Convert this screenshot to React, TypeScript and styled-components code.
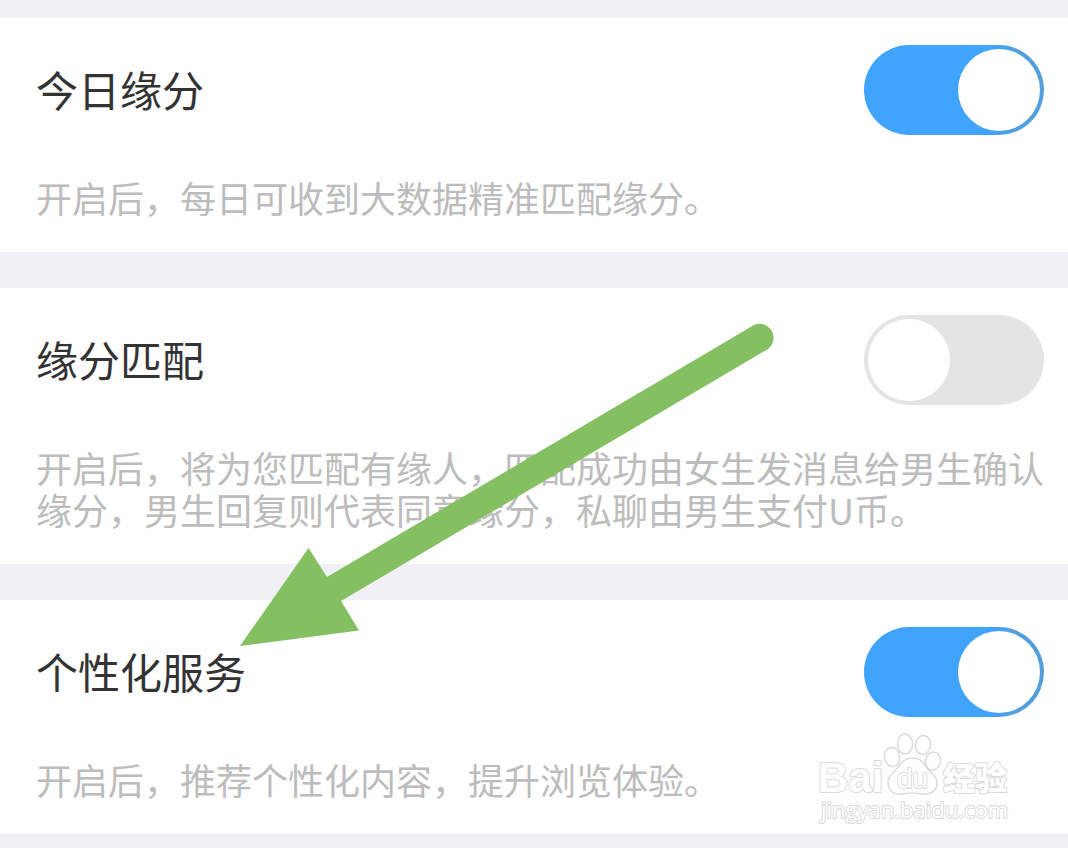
import React from "react";
import styled, { createGlobalStyle } from "styled-components";

const GlobalStyle = createGlobalStyle`
  *, *::before, *::after {
    box-sizing: border-box;
  }
  body {
    margin: 0;
    background: #f0f0f5;
    font-family: "Noto Sans CJK SC", sans-serif;
  }
`;

const Page = styled.main`
  position: relative;
  display: flex;
  flex-direction: column;
  gap: 36px;
  padding: 18px 0 14px;
  overflow: hidden;
`;

const Card = styled.section`
  position: relative;
  display: flex;
  flex-direction: column;
  gap: 41px;
  padding: 27px 24px 34px 36px;
  background: #fefefe;
`;

const SettingRow = styled.div`
  display: flex;
  align-items: center;
  justify-content: space-between;
`;

const Title = styled.label`
  padding-bottom: 2px;
  color: #333333;
  font-size: 42px;
  line-height: 60px;
`;

const Description = styled.p`
  margin: 0;
  color: #bcbcbc;
  font-size: 36px;
  line-height: 42px;
`;

const Switch = styled.input`
  appearance: none;
  flex: none;
  display: flex;
  justify-content: flex-start;
  width: 180px;
  height: 90px;
  margin: 0;
  padding: 4px;
  border-radius: 45px;
  background: #e4e4e4;
  cursor: pointer;

  &::before {
    content: "";
    width: 82px;
    height: 82px;
    border-radius: 50%;
    background: #ffffff;
  }

  &:checked {
    justify-content: flex-end;
    background: linear-gradient(to right, #40a3fc 70%, #529fdc 84%);
  }
`;

const Arrow = styled.svg`
  position: absolute;
  top: 320px;
  left: 236px;
  width: 544px;
  height: 330px;
  pointer-events: none;
`;

const Watermark = styled.svg`
  position: absolute;
  right: 52px;
  bottom: 6px;
  width: 200px;
  height: 100px;
  pointer-events: none;
`;

interface Setting {
  id: string;
  title: string;
  description: string;
  enabled: boolean;
}

const settings: Setting[] = [
  {
    id: "daily",
    title: "今日缘分",
    description: "开启后，每日可收到大数据精准匹配缘分。",
    enabled: true,
  },
  {
    id: "match",
    title: "缘分匹配",
    description:
      "开启后，将为您匹配有缘人，匹配成功由女生发消息给男生确认缘分，男生回复则代表同意缘分，私聊由男生支付U币。",
    enabled: false,
  },
  {
    id: "personal",
    title: "个性化服务",
    description: "开启后，推荐个性化内容，提升浏览体验。",
    enabled: true,
  },
];

function BaiduMark() {
  return (
    <Watermark viewBox="0 0 200 100" role="img" aria-label="Baidu 经验">
      <g fill="#ffffff" stroke="#dadada" strokeWidth="1.5" strokeLinejoin="round">
        <ellipse cx="76" cy="29" rx="7.5" ry="9.5" transform="rotate(-8 76 29)" />
        <ellipse cx="89" cy="16" rx="7.5" ry="10" />
        <ellipse cx="107" cy="17" rx="7.5" ry="9.5" transform="rotate(10 107 17)" />
        <ellipse cx="117" cy="33" rx="7.5" ry="9" transform="rotate(12 117 33)" />
        <path d="M97 30 C104 30 108 34 111 40 C114 45 121 47 121 55 C121 62 116 66 109 66 C104 66 101 65 96 65 C91 65 88 66 83 66 C76 66 72 61 72 54 C72 46 79 45 82 39 C85 34 89 30 97 30 Z" />
        <g paintOrder="stroke" strokeWidth="2">
          <text x="2" y="64" fontFamily="Liberation Sans, sans-serif" fontWeight="700" fontSize="42">
            Bai
          </text>
          <text x="81" y="60" fontFamily="Liberation Sans, sans-serif" fontSize="28">
            du
          </text>
          <text x="127" y="62" fontFamily="Noto Sans CJK SC, sans-serif" fontWeight="900" fontSize="32">
            经验
          </text>
          <text x="5" y="90" fontFamily="Open Sans, sans-serif" fontSize="22">
            jingyan.baidu.com
          </text>
        </g>
      </g>
    </Watermark>
  );
}

export default function App() {
  return (
    <>
      <GlobalStyle />
      <Page>
        {settings.map((item) => (
          <Card key={item.id}>
            <SettingRow>
              <Title htmlFor={item.id}>{item.title}</Title>
              <Switch
                id={item.id}
                type="checkbox"
                role="switch"
                defaultChecked={item.enabled}
                aria-describedby={`${item.id}-description`}
              />
            </SettingRow>
            <Description id={`${item.id}-description`}>{item.description}</Description>
            {item.id === "personal" && <BaiduMark />}
          </Card>
        ))}
        <Arrow viewBox="236 320 544 330" aria-hidden="true">
          <path
            d="M240 646 L308.500 548 L327 577 L754 325 A14 14 0 0 1 768 349 L341 601 L359 630.500 Z"
            fill="#84bf62"
          />
        </Arrow>
      </Page>
    </>
  );
}
